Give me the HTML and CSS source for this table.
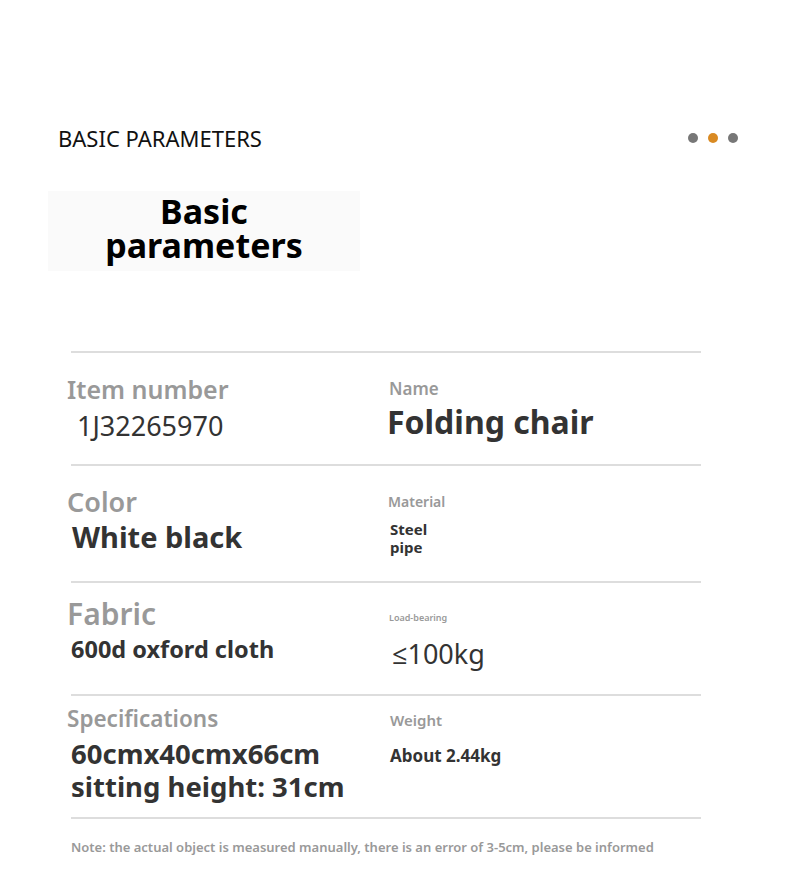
FILE: index.html
```html
<!DOCTYPE html>
<html>
<head>
    <meta charset="utf-8">
    <title>Basic parameters</title>
    <link rel="stylesheet" href="styles.css">
</head>
<body>
    <div class="page">
        <div class="header">
            <span class="header-title">BASIC PARAMETERS</span>
            <div class="dots">
                <span class="dot"></span>
                <span class="dot orange"></span>
                <span class="dot"></span>
            </div>
        </div>

        <div class="title-box">
            <h1>Basic<br>parameters</h1>
        </div>

        <div class="table">
            <div class="row row-1">
                <div class="cell">
                    <div class="label item-label">Item number</div>
                    <div class="value item-value">1J32265970</div>
                </div>
                <div class="cell">
                    <div class="label name-label">Name</div>
                    <div class="value name-value">Folding chair</div>
                </div>
            </div>
            <div class="row row-2">
                <div class="cell">
                    <div class="label color-label">Color</div>
                    <div class="value color-value">White black</div>
                </div>
                <div class="cell">
                    <div class="label material-label">Material</div>
                    <div class="value material-value">Steel<br>pipe</div>
                </div>
            </div>
            <div class="row row-3">
                <div class="cell">
                    <div class="label fabric-label">Fabric</div>
                    <div class="value fabric-value">600d oxford cloth</div>
                </div>
                <div class="cell">
                    <div class="label load-label">Load-bearing</div>
                    <div class="value load-value">≤100kg</div>
                </div>
            </div>
            <div class="row row-4">
                <div class="cell">
                    <div class="label spec-label">Specifications</div>
                    <div class="value spec-value">60cmx40cmx66cm<br>sitting height: 31cm</div>
                </div>
                <div class="cell">
                    <div class="label weight-label">Weight</div>
                    <div class="value weight-value">About 2.44kg</div>
                </div>
            </div>
        </div>

        <p class="note">Note: the actual object is measured manually, there is an error of 3-5cm, please be informed</p>
    </div>
</body>
</html>
```

FILE: styles.css
```css
body {
    margin: 0;
    background-color: #ffffff;
    font-family: "Noto Sans", "Open Sans", sans-serif;
    color: #333333;
}
.page {
    width: 790px;
    padding: 123px 0 0 0;
    box-sizing: border-box;
}
.header {
    display: flex;
    justify-content: space-between;
    align-items: center;
    padding: 0 52px 0 58px;
}
.header-title {
    font-size: 22px;
    color: #111111;
}
.dots {
    display: flex;
    gap: 10px;
}
.dot {
    width: 10px;
    height: 10px;
    border-radius: 50%;
    background-color: #777777;
}
.dot.orange {
    background-color: #d98a23;
}
.title-box {
    margin: 38px 0 0 48px;
    width: 312px;
    height: 80px;
    background-color: #fafafa;
    display: flex;
    justify-content: center;
    align-items: center;
}
h1 {
    margin: -6px 0 0 0;
    font-size: 34px;
    line-height: 34px;
    font-weight: 700;
    color: #000000;
    text-align: center;
}
.table {
    margin: 80px 89px 0 71px;
    border-bottom: 2px solid #dddddd;
}
.row {
    display: grid;
    grid-template-columns: 317px 1fr;
    border-top: 2px solid #dddddd;
    box-sizing: border-box;
}
.row-1 { height: 113px; }
.row-2 { height: 117px; }
.row-3 { height: 113px; }
.row-4 { height: 123px; }
.cell {
    display: flex;
    flex-direction: column;
}
.label {
    color: #999999;
    font-weight: 600;
}
.value {
    color: #333333;
    font-weight: 700;
}
.item-label {
    font-size: 25px;
    margin: 19px 0 0 -4px;
}
.item-value {
    font-size: 27px;
    font-weight: 400;
    margin: 1px 0 0 6px;
}
.name-label {
    font-size: 17px;
    margin: 24px 0 0 1px;
}
.name-value {
    font-size: 32px;
    margin: 0 0 0 -1px;
}
.color-label {
    font-size: 27px;
    margin: 17px 0 0 -4px;
}
.color-value {
    font-size: 29px;
    margin: -3px 0 0 1px;
}
.material-label {
    font-size: 14px;
    margin: 26px 0 0 0;
}
.material-value {
    font-size: 15px;
    line-height: 18px;
    margin: 9px 0 0 2px;
}
.fabric-label {
    font-size: 30px;
    margin: 10px 0 0 -4px;
}
.fabric-value {
    font-size: 23.5px;
    margin: -1px 0 0 0;
}
.load-label {
    font-size: 9px;
    margin: 28px 0 0 1px;
}
.load-value {
    font-size: 27px;
    font-weight: 400;
    margin: 11px 0 0 4px;
}
.spec-label {
    font-size: 22.5px;
    margin: 7px 0 0 -4px;
}
.spec-value {
    font-size: 27.5px;
    line-height: 33px;
    margin: 3px 0 0 0;
}
.weight-label {
    font-size: 15px;
    margin: 14px 0 0 2px;
}
.weight-value {
    font-size: 17px;
    margin: 14px 0 0 2px;
}
.note {
    margin: 19px 0 0 71px;
    font-size: 13px;
    font-weight: 600;
    color: #999999;
}
```
